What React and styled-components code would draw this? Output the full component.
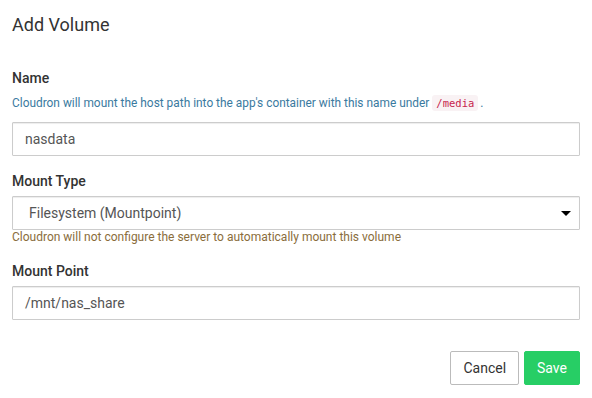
import React from "react";
import styled, { createGlobalStyle } from "styled-components";

const Global = createGlobalStyle`
  html, body { margin: 0; padding: 0; background: #fff; }
  body { font-family: Roboto, "Liberation Sans", sans-serif; color: #333; font-size: 14px; }
  * { box-sizing: border-box; }
`;

const Dialog = styled.div`
  width: 592px;
  height: 398px;
  padding: 15px 12px 0;
  display: flex;
  flex-direction: column;
`;

const Title = styled.h4`
  margin: 0;
  font-size: 18px;
  font-weight: 400;
  line-height: 20px;
  color: #333;
`;

const Body = styled.div`
  margin-top: 33px;
  display: flex;
  flex-direction: column;
`;

const Group = styled.div`
  display: flex;
  flex-direction: column;
  margin-bottom: ${(p) => p.$mb ?? 15}px;
`;

const Label = styled.label`
  font-size: 14px;
  font-weight: 500;
  line-height: 20px;
  color: #333;
  margin-bottom: 5px;
`;

const Help = styled.p`
  margin: 0 0 9px;
  font-size: 11.9px;
  line-height: 20px;
  color: #3a7aa0;
`;

const Warn = styled.p`
  margin: 0;
  font-size: 12px;
  line-height: 14px;
  color: #8a6d3b;
`;

const Code = styled.code`
  font-family: "DejaVu Sans Mono", "Liberation Mono", monospace;
  font-size: 10.5px;
  color: #c7254e;
  background: #f9f2f4;
  padding: 2px 4px;
  border-radius: 3px;
  margin: 0 2px 0 3px;
`;

const Input = styled.div`
  height: 34px;
  border: 1px solid #ccc;
  border-radius: 1px;
  box-shadow: inset 0 1px 1px rgba(0, 0, 0, 0.075);
  padding: 0 12px;
  display: flex;
  align-items: center;
  font-size: 14px;
  color: #555;
  background: #fff;
`;

const Select = styled(Input)`
  padding: 0 8px 0 16px;
  justify-content: space-between;
`;

const Footer = styled.div`
  margin-top: 31px;
  display: flex;
  justify-content: flex-end;
  gap: 5px;
`;

const Button = styled.button`
  height: 34px;
  padding: 0 12px;
  font-family: Roboto, "Liberation Sans", sans-serif;
  font-size: 14px;
  border-radius: 2px;
  border: 1px solid ${(p) => (p.$primary ? "#27ce65" : "#bbb")};
  background: ${(p) => (p.$primary ? "#27ce65" : "#fff")};
  color: ${(p) => (p.$primary ? "#fff" : "#333")};
  cursor: pointer;
`;

const Caret = () => (
  <svg width="10" height="5" viewBox="0 0 10 5">
    <path d="M0 0 L10 0 L5 5 Z" fill="#000" />
  </svg>
);

export default function App() {
  return (
    <>
      <Global />
      <Dialog>
        <Title>Add Volume</Title>
        <Body>
          <Group>
            <Label>Name</Label>
            <Help>
              Cloudron will mount the host path into the app's container with this name under
              <Code>/media</Code>.
            </Help>
            <Input>nasdata</Input>
          </Group>
          <Group $mb={17}>
            <Label>Mount Type</Label>
            <Select>
              <span>Filesystem (Mountpoint)</span>
              <Caret />
            </Select>
            <Warn>Cloudron will not configure the server to automatically mount this volume</Warn>
          </Group>
          <Group $mb={0}>
            <Label>Mount Point</Label>
            <Input>/mnt/nas_share</Input>
          </Group>
          <Footer>
            <Button>Cancel</Button>
            <Button $primary>Save</Button>
          </Footer>
        </Body>
      </Dialog>
    </>
  );
}
